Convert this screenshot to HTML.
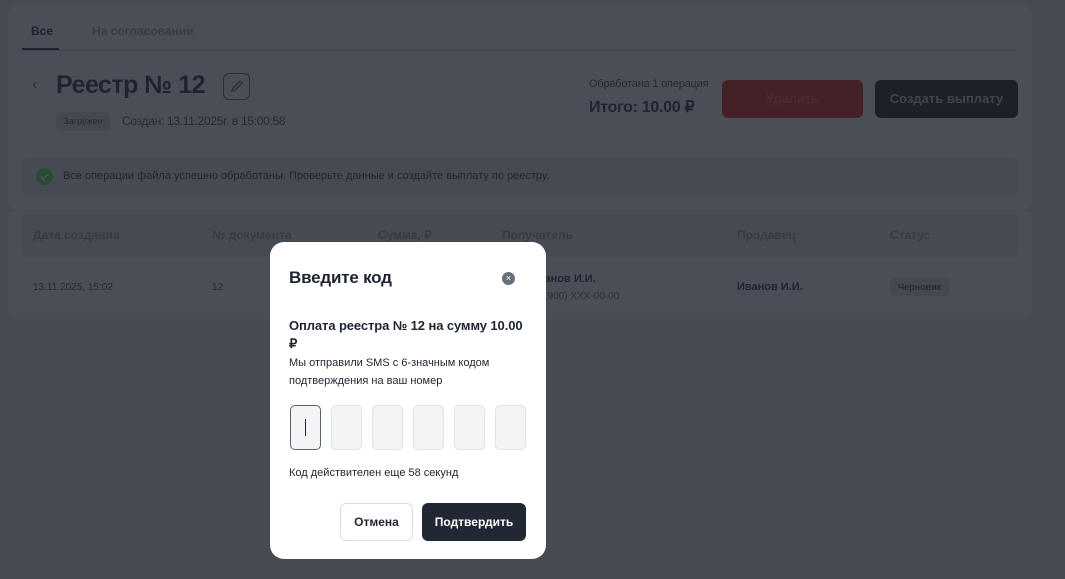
<!DOCTYPE html>
<html><head><meta charset="utf-8"><style>
*{box-sizing:border-box;margin:0;padding:0}
body{width:1065px;height:579px;overflow:hidden;background:#474b53;font-family:"Liberation Sans",sans-serif;position:relative;color:#1e2530}
.a{position:absolute;white-space:nowrap}
.card{position:absolute;background:#4a4e56;border-radius:12px}
</style></head><body>
<div class="card" style="left:8px;top:4px;width:1024px;height:208px"></div>
<div class="card" style="left:8px;top:212px;width:1024px;height:106px;border-radius:0 0 12px 12px"></div>
<div class="a" style="left:31px;top:24px;font-size:12px;font-weight:bold;color:#1e2530">Все</div>
<div class="a" style="left:92px;top:24px;font-size:12px;font-weight:bold;color:#373c45">На согласовании</div>
<div class="a" style="left:22px;top:50px;width:996px;height:1px;background:#42464e"></div>
<div class="a" style="left:22px;top:48px;width:37px;height:2px;background:#1e2530"></div>
<div class="a" style="left:32px;top:76px;font-size:16px;color:#2a2f38">‹</div>
<div class="a" style="left:56px;top:71px;font-size:25px;font-weight:bold;color:#1e2530;letter-spacing:-0.5px">Реестр № 12</div>
<div class="a" style="left:223px;top:73px;width:27px;height:27px;border:1px solid #2a2f38;border-radius:6px"><svg width="25" height="25" viewBox="0 0 25 25"><path d="M8 17l1-3 7-7 2 2-7 7z" fill="none" stroke="#2a2f38" stroke-width="1.3"/></svg></div>
<div class="a" style="left:56px;top:112px;width:54px;height:19px;background:#444850;border-radius:4px;font-size:9px;color:#262b33;text-align:center;line-height:19px">Загружен</div>
<div class="a" style="left:122px;top:114px;font-size:12px;color:#262b33;letter-spacing:-0.3px">Создан: 13.11.2025г. в 15:00:58</div>
<div class="a" style="left:589px;top:78px;font-size:11px;color:#262b33;letter-spacing:-0.2px">Обработана 1 операция</div>
<div class="a" style="left:589px;top:97px;font-size:16px;font-weight:bold;color:#1e2530;letter-spacing:-0.3px">Итого: 10.00 ₽</div>
<div class="a" style="left:722px;top:80px;width:141px;height:38px;background:#432127;border-radius:6px;font-size:13px;font-weight:bold;color:#4a2a30;text-align:center;line-height:38px">Удалить</div>
<div class="a" style="left:875px;top:80px;width:143px;height:38px;background:#1c2029;border-radius:6px;font-size:13px;font-weight:bold;color:#3f444c;text-align:center;line-height:38px">Создать выплату</div>
<div class="a" style="left:22px;top:157px;width:996px;height:39px;background:#464a52;border-radius:6px"></div>
<div class="a" style="left:36px;top:168px;width:17px;height:17px;border-radius:50%;background:#2a4a38"><svg width="17" height="17"><path d="M5 8.5l2.5 2.5 4.5-5" fill="none" stroke="#4a5058" stroke-width="1.6"/></svg></div>
<div class="a" style="left:63px;top:170px;font-size:11px;color:#22272f">Все операции файла успешно обработаны. Проверьте данные и создайте выплату по реестру.</div>
<div class="a" style="left:22px;top:214px;width:996px;height:43px;background:#464a52;border-radius:6px"></div>
<div class="a" style="left:33px;top:228px;font-size:12px;font-weight:bold;color:#363b44">Дата создания</div>
<div class="a" style="left:212px;top:228px;font-size:12px;font-weight:bold;color:#363b44">№ документа</div>
<div class="a" style="left:378px;top:228px;font-size:12px;font-weight:bold;color:#363b44">Сумма, ₽</div>
<div class="a" style="left:502px;top:228px;font-size:12px;font-weight:bold;color:#363b44">Получатель</div>
<div class="a" style="left:737px;top:228px;font-size:12px;font-weight:bold;color:#363b44">Продавец</div>
<div class="a" style="left:890px;top:228px;font-size:12px;font-weight:bold;color:#363b44">Статус</div>
<div class="a" style="left:33px;top:282px;font-size:10px;color:#262b33">13.11.2025, 15:02</div>
<div class="a" style="left:212px;top:282px;font-size:10px;color:#262b33">12</div>
<div class="a" style="left:530px;top:273px;font-size:11px;font-weight:bold;color:#1e2530">Иванов И.И.</div>
<div class="a" style="left:530px;top:291px;font-size:10px;color:#2e333b">+7 (900) XXX-00-00</div>
<div class="a" style="left:737px;top:281px;font-size:11px;font-weight:bold;color:#1e2530">Иванов И.И.</div>
<div class="a" style="left:890px;top:278px;width:59px;height:18px;background:#444850;border-radius:4px;font-size:9px;font-weight:bold;color:#262b33;text-align:center;line-height:18px">Черновик</div>

<div class="a" style="left:270px;top:242px;width:276px;height:317px;background:#fff;border-radius:14px"></div>
<div class="a" style="left:289px;top:268px;font-size:17px;font-weight:bold;color:#1e2530;letter-spacing:-0.2px">Введите код</div>
<div class="a" style="left:502px;top:272px;width:13px;height:13px;border-radius:50%;background:#69707c;color:#fff;font-size:9px;line-height:13px;text-align:center">×</div>
<div class="a" style="left:289px;top:317px;font-size:13px;font-weight:bold;color:#1e2530;line-height:18px;white-space:normal;width:240px;letter-spacing:-0.1px">Оплата реестра № 12 на сумму 10.00 ₽</div>
<div class="a" style="left:289px;top:354px;font-size:11px;color:#1e2530;line-height:18px;white-space:normal;width:240px">Мы отправили SMS с 6-значным кодом подтверждения на ваш номер</div>
<div class="a" style="left:290px;top:405px;width:31px;height:45px;background:#f3f4f6;border:1px solid #5a6270;border-radius:5px"><div style="position:absolute;left:14px;top:13px;width:1px;height:17px;background:#1e2530"></div></div>
<div class="a" style="left:331px;top:405px;width:31px;height:45px;background:#f3f4f6;border:1px solid #dfe2e6;border-radius:5px"></div>
<div class="a" style="left:372px;top:405px;width:31px;height:45px;background:#f3f4f6;border:1px solid #dfe2e6;border-radius:5px"></div>
<div class="a" style="left:413px;top:405px;width:31px;height:45px;background:#f3f4f6;border:1px solid #dfe2e6;border-radius:5px"></div>
<div class="a" style="left:454px;top:405px;width:31px;height:45px;background:#f3f4f6;border:1px solid #dfe2e6;border-radius:5px"></div>
<div class="a" style="left:495px;top:405px;width:31px;height:45px;background:#f3f4f6;border:1px solid #dfe2e6;border-radius:5px"></div>
<div class="a" style="left:289px;top:467px;font-size:11px;color:#1e2530">Код действителен еще 58 секунд</div>
<div class="a" style="left:340px;top:503px;width:73px;height:38px;border:1px solid #d9dce1;border-radius:6px;font-size:12px;font-weight:bold;color:#1e2530;text-align:center;line-height:36px">Отмена</div>
<div class="a" style="left:422px;top:503px;width:104px;height:38px;background:#222833;border-radius:6px;font-size:12px;font-weight:bold;color:#fff;text-align:center;line-height:38px">Подтвердить</div>
</body></html>
